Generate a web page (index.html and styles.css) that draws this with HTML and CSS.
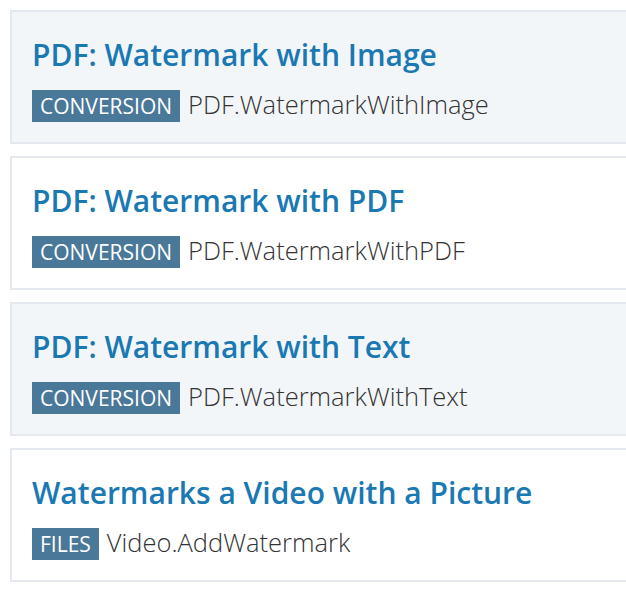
FILE: index.html
```html
<!DOCTYPE html>
<html>
<head>
<meta charset="utf-8">
<link rel="stylesheet" href="styles.css">
</head>
<body>
<div class="list">
  <div class="card alt">
    <div class="title">PDF: Watermark with Image</div>
    <div class="meta"><span class="badge">CONVERSION</span><span class="name">PDF.WatermarkWithImage</span></div>
  </div>
  <div class="card">
    <div class="title">PDF: Watermark with PDF</div>
    <div class="meta"><span class="badge">CONVERSION</span><span class="name">PDF.WatermarkWithPDF</span></div>
  </div>
  <div class="card alt">
    <div class="title">PDF: Watermark with Text</div>
    <div class="meta"><span class="badge">CONVERSION</span><span class="name">PDF.WatermarkWithText</span></div>
  </div>
  <div class="card">
    <div class="title">Watermarks a Video with a Picture</div>
    <div class="meta"><span class="badge">FILES</span><span class="name">Video.AddWatermark</span></div>
  </div>
</div>
</body>
</html>
```
FILE: styles.css
```css
html, body {
  margin: 0;
  padding: 0;
  background: #ffffff;
  overflow: hidden;
}
body {
  font-family: "Open Sans", "Liberation Sans", sans-serif;
}
.list {
  display: flex;
  flex-direction: column;
  gap: 12px;
  padding: 10px 0 0 10px;
  width: 660px;
}
.card {
  border: 2px solid #e4e8ef;
  background: #ffffff;
  padding: 23px 20px 22px 20px;
}
.card.alt {
  background: #f3f6f9;
}
.title {
  font-size: 30px;
  font-weight: 600;
  line-height: 40px;
  color: #1a78b3;
  margin-bottom: 13px;
}
.meta {
  display: flex;
  align-items: baseline;
  gap: 8px;
  height: 32px;
}
.badge {
  background: #4a7899;
  color: #ffffff;
  font-size: 21px;
  line-height: 32px;
  height: 32px;
  padding: 0 8px;
}
.name {
  font-size: 25.5px;
  font-weight: 300;
  line-height: 32px;
  color: #333333;
}
```
